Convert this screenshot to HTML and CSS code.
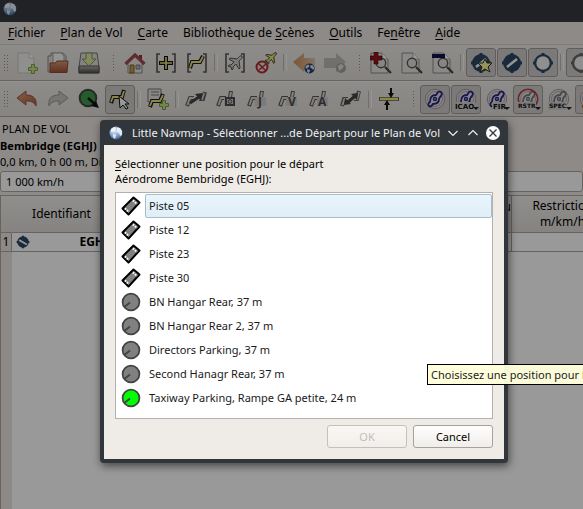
FILE: index.html
```html
<!DOCTYPE html>
<html lang="fr">
<head>
<meta charset="utf-8">
<title>Little Navmap</title>
<link rel="stylesheet" href="styles.css">
</head>
<body>
<svg class="defs" aria-hidden="true">
  <defs>
    <linearGradient id="orange" x1="0" y1="0" x2="1" y2="0"><stop offset="0" stop-color="#cf8f5c"/><stop offset="1" stop-color="#dcc3a8"/></linearGradient>
    <linearGradient id="folder" x1="0" y1="0" x2="0" y2="1"><stop offset="0" stop-color="#ce9880"/><stop offset="1" stop-color="#a8502f"/></linearGradient>
    <linearGradient id="undo" x1="0" y1="0" x2="1" y2="1"><stop offset="0" stop-color="#dca07c"/><stop offset="1" stop-color="#a85a3c"/></linearGradient>
    <linearGradient id="metal" x1="0" y1="0" x2="0" y2="1"><stop offset="0" stop-color="#b5b3b0"/><stop offset="1" stop-color="#4c4a48"/></linearGradient>
    <radialGradient id="ball" cx=".4" cy=".3" r=".8"><stop offset="0" stop-color="#e8f2fc"/><stop offset=".55" stop-color="#7fa3cc"/><stop offset="1" stop-color="#2b4d80"/></radialGradient>
    <symbol id="globe" viewBox="0 0 14 14"><circle cx="7" cy="7" r="6.5" fill="url(#ball)"/><path d="M2 3l3-2 2 1-1 2-2 2-2 0zM8 2l3 0 2 3 0 4-2 1-1-3-2-1zM4 8l3 1-1 4-2-2z" fill="#f4f7fa" opacity=".85"/></symbol>
    <symbol id="darkglobe" viewBox="0 0 14 14"><circle cx="7" cy="7" r="6.5" fill="#25446e"/><path d="M2 4l3-2 2 1-1 2-2 2-2 0zM8 3l3 0 2 3-1 3-2-2-2-1zM4 8l4 1-2 4-2-2z" fill="#dde6ee"/></symbol>
    <symbol id="plus" viewBox="0 0 10 10"><path d="M3.5.5h3v3h3v3h-3v3h-3v-3h-3v-3h3z" fill="#c3dc88" stroke="#7f9f42"/></symbol>
    <symbol id="new" viewBox="0 0 22 22"><path d="M2 1h11l5 5v15H2z" fill="#efefec" stroke="#c9c7c3"/><path d="M13 1v5h5" fill="#fff" stroke="#c9c7c3"/><use href="#plus" x="12" y="12" width="10" height="10"/></symbol>
    <symbol id="open" viewBox="0 0 22 22"><path d="M1 20V4h3V1h12l3 3v16z" fill="#dcdad7" stroke="#8c8a86"/><path d="M6 1h8l3 3v8H6z" fill="#f7f7f5" stroke="#a5a39f"/><path d="M3 20.500V11h5l2-2h11l-1 11.500z" fill="url(#folder)" stroke="#8f4a31"/></symbol>
    <symbol id="save" viewBox="0 0 22 22"><path d="M3 1h16l2 14v6H1v-6z" fill="#deddda" stroke="#75736f"/><path d="M1 14h20v7H1z" fill="url(#metal)" stroke="#55534f"/><path d="M8 1h6v6h4l-7 7-7-7h4z" fill="#dce7a0" stroke="#839352"/></symbol>
    <symbol id="home" viewBox="0 0 22 22"><path d="M4 10v11h14V10l-7-7z" fill="#e8e5df" stroke="#898581"/><path d="M15 3h3v5h-3z" fill="#8f3434"/><path d="M1.500 12L11 3l9.500 9" fill="none" stroke="#a04a50" stroke-width="3.200"/><path d="M6 13h4v8H6z" fill="#c49a55" stroke="#80602d"/><path d="M12 13h4v4h-4z" fill="#a4bad0" stroke="#777"/></symbol>
    <symbol id="brackets" viewBox="0 0 22 22"><path d="M5 2H2v18h3M17 2h3v18h-3" fill="none" stroke="#555" stroke-width="1.600"/></symbol>
    <symbol id="center" viewBox="0 0 22 22"><use href="#brackets"/><path d="M11 4v14M4 11h14" stroke="#111" stroke-width="4"/><path d="M11 5v12M5 11h12" stroke="#e9e275" stroke-width="1.600"/></symbol>
    <symbol id="track" viewBox="0 0 22 22"><path d="M4 16l2-6h8l3-6" fill="none" stroke="#1a1a1a" stroke-width="4"/><path d="M4 15.500l2-5.500h8l3-5.500" fill="none" stroke="#e9e275" stroke-width="1.800"/></symbol>
    <symbol id="fit" viewBox="0 0 22 22"><use href="#brackets"/><use href="#track"/></symbol>
    <symbol id="jet" viewBox="0 0 16 16"><path d="M15 1c-2-1-3 1-5 3L3 3 2 4l5 3-3 3-2 0-1 1 3 1 1 3 1-1 0-2 3-3 3 5 1-1-1-7c2-2 4-3 3-5z"/></symbol>
    <symbol id="aircraft" viewBox="0 0 22 22"><use href="#brackets"/><use href="#jet" x="3" y="3" width="16" height="16" fill="#ccc" stroke="#555"/></symbol>
    <symbol id="notrail" viewBox="0 0 22 22"><use href="#jet" x="9" y="0" width="13" height="13" fill="#eee66e" stroke="#222"/><circle cx="7" cy="15" r="5.500" fill="#ddd" stroke="#b12a32" stroke-width="2"/><path d="M3 11l8 8M11 12l-7 6" stroke="#b12a32" stroke-width="1.500"/></symbol>
    <symbol id="back" viewBox="0 0 22 22"><path d="M0 10L11 1v5h11v10H11v4z" fill="url(#orange)"/><use href="#darkglobe" x="11" y="11" width="11" height="11"/></symbol>
    <symbol id="forward" viewBox="0 0 22 22"><g opacity=".7"><path d="M22 10L12 1v5H0v10h12v4z" fill="#aaaaa8"/><circle cx="17" cy="16" r="5" fill="#888"/><path d="M14 14l3-2 3 2-2 3-3 2z" fill="#ddd"/></g></symbol>
    <symbol id="zoom" viewBox="0 0 22 22"><path d="M1 1h11l6 6v14H1z" fill="#e6e5e2" stroke="#8d8b87"/><path d="M12 1v6h6" fill="#fff" stroke="#aaa"/><circle cx="11" cy="11" r="4.700" fill="#deded9" stroke="#555" stroke-width="1.400"/><path d="M15 15l6 6" stroke="#444" stroke-width="2.200"/></symbol>
    <symbol id="zoomplus" viewBox="0 0 22 22"><use href="#zoom"/><path d="M4 0h4v4h4v4H8v4H4V8H0V4h4z" fill="#951620" stroke="#400" stroke-width=".6"/></symbol>
    <symbol id="zoombar" viewBox="0 0 22 22"><use href="#zoom"/><path d="M0 2h13v4H0z" fill="#12124f"/></symbol>
    <symbol id="port" viewBox="0 0 22 22"><path d="M11 1v20M1 11h20" stroke="#2a4766" stroke-width="3"/><circle cx="11" cy="11" r="9" fill="#2a4766"/></symbol>
    <symbol id="portline" viewBox="0 0 22 22"><use href="#port"/><path d="M6 15l10-8" stroke="#f5f5f5" stroke-width="2.600"/></symbol>
    <symbol id="portlineback" viewBox="0 0 22 22"><use href="#port"/><path d="M5 8l12 7" stroke="#f5f5f5" stroke-width="3"/></symbol>
    <symbol id="portstar" viewBox="0 0 22 22"><use href="#portline"/><path d="M15 7l2 4 5 0-4 4 2 5-5-3-5 3 2-5-4-4 5 0z" fill="#fbf59b" stroke="#33331c"/></symbol>
    <symbol id="portopen" viewBox="0 0 22 22"><use href="#port"/><circle cx="11" cy="11" r="6.700" fill="#eee"/></symbol>
    <symbol id="portgray" viewBox="0 0 22 22"><path d="M11 1v20M1 11h20" stroke="#666" stroke-width="3"/><circle cx="11" cy="11" r="8" fill="#eee" stroke="#666" stroke-width="2.500"/></symbol>
    <symbol id="undoarrow" viewBox="0 0 22 22"><path d="M1 10l9-7v4c8 0 11 4 10 11-2-4-5-5-10-5v4z" fill="url(#undo)" stroke="#9a5a3f"/></symbol>
    <symbol id="redoarrow" viewBox="0 0 22 22"><path d="M21 10l-9-7v4C4 7 1 11 2 18c2-4 5-5 10-5v4z" fill="#c5c4c2" stroke="#969592"/></symbol>
    <symbol id="go" viewBox="0 0 22 22"><circle cx="10" cy="10" r="8.300" fill="#3c9b48" stroke="#444" stroke-width="2"/><path d="M10 10l8 7" stroke="#111" stroke-width="2.500"/><path d="M21 20l-8-2 5-5z" fill="#111"/></symbol>
    <symbol id="edit" viewBox="0 0 22 22"><path d="M2 15l2-6h9l2-7" fill="none" stroke="#1a1a1a" stroke-width="4"/><path d="M2 14l2-5h9l2-6" fill="none" stroke="#e9e275" stroke-width="1.800"/><path d="M10 8l10 8-4 0 3 4-2 1-3-4-3 3z" fill="#fff" stroke="#111"/></symbol>
    <symbol id="append" viewBox="0 0 22 22"><path d="M1 1h13v13H1z" fill="#e3e2df" stroke="#777"/><path d="M4 4h8M4 7h8" stroke="#777"/><path d="M3 19l2-6h8l3-7" fill="none" stroke="#1a1a1a" stroke-width="4"/><path d="M3 18l2-5h8l3-6" fill="none" stroke="#e9e275" stroke-width="1.800"/><use href="#plus" x="12" y="12" width="10" height="10"/></symbol>
    <symbol id="graytrack" viewBox="0 0 22 22"><path d="M2 18l3-8h5" fill="none" stroke="#5a5855" stroke-width="4"/><path d="M14 9l1-6" fill="none" stroke="#5a5855" stroke-width="4"/><path d="M2.500 17l2.500-7h5M14 9l1-5" fill="none" stroke="#d8d5d2" stroke-width="2"/><path d="M8 9h11v9H8z" fill="#d0cdca"/></symbol>
    <symbol id="direct" viewBox="0 0 22 22"><path d="M2 18l3-8h4M14 11h4l2-7" fill="none" stroke="#66635f" stroke-width="4"/><path d="M2.500 17l2.500-7h4M14 11h3l2-6" fill="none" stroke="#d8d5d2" stroke-width="2"/><path d="M5 15l9-6" stroke="#444" stroke-width="3"/><path d="M18 5l-2 8-6-7z" fill="#444"/></symbol>
    <symbol id="double" viewBox="0 0 22 22"><path d="M2 18l2-7h4M14 11h3l2-8" fill="none" stroke="#66635f" stroke-width="4"/><path d="M2.500 17l2-6h4M14 11h3l2-7" fill="none" stroke="#d8d5d2" stroke-width="2"/><path d="M7 15l8-7" stroke="#444" stroke-width="3"/><path d="M4 17l1-7 6 6zM18 5l-7 1 6 6z" fill="#444"/></symbol>
    <symbol id="merge" viewBox="0 0 22 22"><path d="M1 11h20" stroke="#66635a" stroke-width="4"/><path d="M2 11h18" stroke="#e9e275" stroke-width="2.400"/><path d="M13 0v5M9 22v-6" stroke="#111" stroke-width="2"/><path d="M10 5h6l-3 5zM6 17h6l-3-5z" fill="#111"/></symbol>
    <symbol id="space" viewBox="0 0 22 22"><circle cx="11" cy="11" r="9.700" fill="#e3dfdc" stroke="#a58b90" stroke-width=".9"/><circle cx="11" cy="11" r="7.500" fill="none" stroke="#9a98a8" stroke-width=".8"/><path d="M5 18c-1-1-1-3 1-4 0-5 2-7 6-7l2-3c3-1 5 1 3 4-1 1-2 2-2 3 0 4-3 5-6 5-1 2-3 3-4 2z" fill="#dedce4" stroke="currentColor" stroke-width="1.800"/><circle cx="11" cy="11" r="1.500" fill="none" stroke="currentColor" stroke-width="1.400"/></symbol>
    <symbol id="ring" viewBox="0 0 22 22"><circle cx="11" cy="11" r="9.700" fill="none" stroke="currentColor" stroke-width="1.600"/></symbol>
    <symbol id="runway" viewBox="0 0 20 20"><path d="M1.500 12.500L12.500 1.500l6 5L7.500 18.500z" fill="#808080" stroke="#000" stroke-width="2" stroke-linejoin="round"/><path d="M4 12.500l4 3.500M12 4.500l4 3.500" stroke="#fff" stroke-width="2" stroke-dasharray="1.500 1"/></symbol>
    <symbol id="stand" viewBox="0 0 20 20"><circle cx="10" cy="10" r="8.400" fill="currentColor" stroke="#444" stroke-width="1.800"/><path d="M4 14.500l5-4" stroke="#444" stroke-width="2"/></symbol>
  </defs>
</svg>

<div class="window">
  <header class="titlebar"><svg class="globe"><use href="#globe"/></svg></header>
  <nav class="menubar">
    <a href="#"><u>F</u>ichier</a><a href="#"><u>P</u>lan de Vol</a><a href="#"><u>C</u>arte</a><a href="#">Bibliothèque de <u>S</u>cènes</a><a href="#"><u>O</u>utils</a><a href="#">Fe<u>n</u>être</a><a href="#"><u>A</u>ide</a>
  </nav>
  <div class="toolbar">
    <span class="grip first"></span>
    <button class="tool"><svg><use href="#new"/></svg></button>
    <button class="tool"><svg><use href="#open"/></svg></button>
    <button class="tool"><svg><use href="#save"/></svg></button>
    <span class="grip"></span>
    <button class="tool"><svg><use href="#home"/></svg></button>
    <button class="tool"><svg><use href="#center"/></svg></button>
    <button class="tool"><svg><use href="#fit"/></svg></button>
    <span class="sep"></span>
    <button class="tool"><svg><use href="#aircraft"/></svg></button>
    <button class="tool"><svg><use href="#notrail"/></svg></button>
    <span class="sep"></span>
    <button class="tool"><svg><use href="#back"/></svg></button>
    <button class="tool"><svg><use href="#forward"/></svg></button>
    <span class="grip"></span>
    <button class="tool"><svg><use href="#zoomplus"/></svg></button>
    <button class="tool"><svg><use href="#zoom"/></svg></button>
    <button class="tool"><svg><use href="#zoombar"/></svg></button>
    <span class="sep"></span>
    <button class="tool on"><svg><use href="#portstar"/></svg></button>
    <button class="tool on"><svg><use href="#portline"/></svg></button>
    <button class="tool on"><svg><use href="#portopen"/></svg></button>
    <span class="sep"></span>
    <button class="tool on"><svg><use href="#portgray"/></svg></button>
  </div>
  <div class="toolbar">
    <span class="grip first"></span>
    <button class="tool"><svg><use href="#undoarrow"/></svg></button>
    <button class="tool"><svg><use href="#redoarrow"/></svg></button>
    <button class="tool"><svg><use href="#go"/></svg></button>
    <button class="tool on"><svg><use href="#edit"/></svg></button>
    <span class="sep"></span>
    <button class="tool"><svg><use href="#append"/></svg></button>
    <span class="sep"></span>
    <button class="tool"><svg><use href="#direct"/></svg></button>
    <button class="tool"><svg viewBox="0 0 22 22"><use href="#graytrack"/><path d="M10 10h8v7h-8z" fill="#ccc" stroke="#4c4c4c" stroke-width="2"/><circle cx="14" cy="13.500" r="1.800" fill="none" stroke="#4c4c4c"/></svg></button>
    <button class="tool"><svg viewBox="0 0 22 22"><use href="#graytrack"/><text class="leg" x="11" y="18">J</text></svg></button>
    <button class="tool"><svg viewBox="0 0 22 22"><use href="#graytrack"/><text class="leg" x="10" y="18">V</text></svg></button>
    <button class="tool"><svg viewBox="0 0 22 22"><use href="#graytrack"/><text class="leg" x="9" y="18">A</text></svg></button>
    <button class="tool"><svg><use href="#double"/></svg></button>
    <span class="sep"></span>
    <button class="tool"><svg><use href="#merge"/></svg></button>
    <span class="grip"></span>
    <button class="tool on blue"><svg><use href="#space"/></svg></button>
    <button class="tool on blue drop"><svg viewBox="0 0 22 22"><use href="#space"/><path class="plate" d="M0 14h20v8H0z"/><text class="tag" x="0" y="21">ICAO</text></svg></button>
    <button class="tool blue drop"><svg viewBox="0 0 22 22"><use href="#space"/><path class="plate" d="M6 14h14v8H6z"/><text class="tag" x="7" y="21">FIR</text></svg></button>
    <button class="tool on gray drop"><svg viewBox="0 0 22 22"><use href="#space"/><use class="red" href="#ring"/><path class="plate" d="M0 14h19v8H0z"/><text class="tag small" x="1" y="20">RSTR</text></svg></button>
    <button class="tool gray drop"><svg viewBox="0 0 22 22"><use href="#space"/><path class="plate" d="M0 14h18v8H0z"/><text class="tag small" x="1" y="20">SPEC</text></svg></button>
    <button class="tool on gray drop"><svg viewBox="0 0 22 22"><use href="#space"/><path class="plate" d="M3 14h16v8H3z"/><text class="tag" x="3" y="21">O</text></svg></button>
  </div>
  <main class="plan">
    <h2>PLAN DE VOL</h2>
    <p class="route">Bembridge (EGHJ)</p>
    <p class="summary">0,0 km, 0 h 00 m, Di</p>
    <input class="speed" type="text" value="1 000 km/h" aria-label="Vitesse">
    <div class="grid">
      <table>
        <colgroup><col class="c-num"><col class="c-ident"><col class="c-mid"><col class="c-restr"></colgroup>
        <thead><tr><th class="corner"></th><th>Identifiant</th><th class="end">u</th><th>Restriction<br>m/km/h</th></tr></thead>
        <tbody><tr><th>1</th><td><span class="ident"><svg><use href="#portlineback"/></svg><b>EGHJ</b></span></td><td></td><td></td></tr></tbody>
      </table>
    </div>
  </main>
</div>

<div class="shade"></div>

<section class="dialog" role="dialog" aria-labelledby="dialog-title">
  <header class="dialog-title">
    <svg class="globe"><use href="#globe"/></svg>
    <h1 id="dialog-title">Little Navmap - Sélectionner ...de Départ pour le Plan de Vol</h1>
    <button aria-label="Réduire"><svg viewBox="0 0 14 14"><path d="M2.500 5L7 9.500 11.500 5" fill="none" stroke="#eee" stroke-width="1.200"/></svg></button>
    <button aria-label="Agrandir"><svg viewBox="0 0 14 14"><path d="M2.500 9L7 4.500 11.500 9" fill="none" stroke="#eee" stroke-width="1.200"/></svg></button>
    <button aria-label="Fermer"><svg viewBox="0 0 14 14"><circle cx="7" cy="7" r="7" fill="#fcfcfc"/><path d="M3.500 3.500l7 7M10.500 3.500l-7 7" stroke="#31363b" stroke-width="1.300"/></svg></button>
  </header>
  <div class="dialog-body">
    <p class="prompt" id="prompt"><u>S</u>électionner une position pour le départ<br>Aérodrome Bembridge (EGHJ):</p>
    <ul class="list" role="listbox" aria-labelledby="prompt">
      <li role="option" aria-selected="true" class="current"><svg><use href="#runway"/></svg><span>Piste 05</span></li>
      <li role="option"><svg><use href="#runway"/></svg><span>Piste 12</span></li>
      <li role="option"><svg><use href="#runway"/></svg><span>Piste 23</span></li>
      <li role="option"><svg><use href="#runway"/></svg><span>Piste 30</span></li>
      <li role="option"><svg><use href="#stand"/></svg><span>BN Hangar Rear, 37 m</span></li>
      <li role="option"><svg><use href="#stand"/></svg><span>BN Hangar Rear 2, 37 m</span></li>
      <li role="option"><svg><use href="#stand"/></svg><span>Directors Parking, 37 m</span></li>
      <li role="option"><svg><use href="#stand"/></svg><span>Second Hanagr Rear, 37 m</span></li>
      <li role="option"><svg class="ramp"><use href="#stand"/></svg><span>Taxiway Parking, Rampe GA petite, 24 m</span></li>
    </ul>
    <div class="actions"><button disabled>OK</button><button>Cancel</button></div>
  </div>
</section>
<div class="tooltip" role="tooltip">Choisissez une position pour le départ</div>
</body>
</html>
```
FILE: styles.css
```css
* { box-sizing: border-box; }
html, body { margin: 0; height: 100%; overflow: hidden; }
body { position: relative; font: 11px/16px "Noto Sans", sans-serif; color: #000; background: #fff; }
button, input { font: inherit; color: inherit; }
h1, h2, p, ul { margin: 0; padding: 0; font-size: inherit; font-weight: 400; }
u { text-underline-offset: 2px; }
svg { display: block; flex: none; }
.defs { position: absolute; width: 0; height: 0; }
.globe { width: 14px; height: 14px; }

.window { display: flex; flex-direction: column; min-height: 100%; background: #ebe7e3; }
.titlebar { height: 22px; padding: 2px 3px; background: #363a3e; }
.menubar { display: flex; gap: 15px; padding: 0 8px; height: 22px; font-size: 12px; line-height: 22px; white-space: nowrap; }
.menubar a { color: inherit; text-decoration: none; }

.toolbar { display: flex; align-items: center; gap: 1px; height: 37px; overflow: hidden; border-top: 1px solid #d6d2cd; border-bottom: 1px solid #aaa7a3; background: linear-gradient(#edeae6, #e1ddd9); }
.toolbar + .toolbar { height: 36px; border-top-color: #f8f5f2; }
.tool { flex: none; display: grid; place-items: center; position: relative; width: 30px; height: 29px; padding: 0; border: 1px solid transparent; border-radius: 3px; background: none; }
.tool svg { width: 22px; height: 22px; }
.tool.on { border-color: #a19d99; background: #cfccc9; }
.tool.blue { color: #262680; }
.tool.gray { color: #777; }
.tool .red { color: #b93a42; }
.tool.drop::after { content: ""; position: absolute; right: 1px; bottom: 3px; border: 3px solid transparent; border-top-color: #222; border-bottom: 0; }
.plate { fill: #d2d0cd; }
.tag { font: bold 7px "DejaVu Sans", sans-serif; fill: #111; }
.tag.small { font-size: 6px; }
.leg { font: bold 12px "Noto Sans", sans-serif; fill: #4c4c4c; }
.grip { flex: none; width: 14px; height: 18px; padding-left: 7px; background: radial-gradient(circle, #97938f 1px, transparent 1px) 0 0 / 3px 3px content-box content-box; border-right: 3px solid transparent; }
.grip.first { width: 11px; padding-left: 3px; }
.sep { flex: none; width: 6px; height: 17px; display: grid; justify-content: center; }
.sep::before { content: ""; width: 2px; border-left: 1px solid #bdb9b5; border-right: 1px solid #faf8f6; }

.plan { flex: 1; display: flex; flex-direction: column; padding-top: 3px; }
.plan h2 { padding-left: 2px; line-height: 17px; }
.route { font-weight: 700; line-height: 17px; }
.summary { line-height: 16px; }
.speed { flex: none; height: 21px; margin: 1px 0 3px; padding: 0 5px; border: 1px solid #aaa6a2; border-radius: 3px; background: #fff; width: 100%; }
.grid { flex: 1; overflow: hidden; border-top: 1px solid #aaa6a2; border-left: 1px solid #aaa6a2; background: linear-gradient(90deg, #e9e5e1 11px, #fff 11px); }
table { table-layout: fixed; width: 613px; border-collapse: separate; border-spacing: 0; font-size: 12px; }
.c-num { width: 11px; }
.c-ident { width: 100px; }
.c-mid { width: 400px; }
.c-restr { width: 102px; }
th, td { padding: 0; font-weight: 400; border-right: 1px solid #aaa6a2; border-bottom: 1px solid #aaa6a2; }
thead th { height: 37px; background: linear-gradient(#f1eeeb, #dfdbd7); }
thead .corner { border-right-color: transparent; }
thead .end { text-align: right; vertical-align: top; padding-top: 3px; }
tbody th { background: #e9e5e1; }
tbody td { height: 19px; background: #fff; }
.ident { display: flex; justify-content: space-between; align-items: center; padding: 0 3px 0 4px; }
.ident svg { width: 14px; height: 14px; }

.shade { position: absolute; inset: 0; background: rgba(0, 0, 0, .4); }

.dialog { position: absolute; left: 100px; top: 120px; width: 408px; border-radius: 4px; padding: 0 4px 4px; background: #31363b; box-shadow: 1px 3px 9px rgba(0, 0, 0, .55); }
.dialog-title { display: flex; align-items: center; gap: 6px; height: 25px; padding: 0 5px; color: #eff0f1; }
.dialog-title h1 { flex: 1; padding-left: 3px; white-space: nowrap; }
.dialog-title button { padding: 0; border: 0; background: none; }
.dialog-title button svg { width: 14px; height: 14px; }
.dialog-body { padding: 11px; background: #efebe7; }
.prompt { line-height: 15px; margin-bottom: 6px; }
.list { height: 227px; list-style: none; background: #fff; border: 1px solid #b4b0ac; padding-top: 1px; }
.list li { display: flex; align-items: center; height: 24px; padding-left: 5px; color: #1a1a1a; }
.list svg { width: 20px; height: 20px; margin-right: 4px; color: #808080; }
.list svg.ramp { color: #0f0; }
.list span { flex: 1; line-height: 22px; padding-left: 3px; border: 1px solid transparent; }
.current span { background: linear-gradient(#e9f5fd, #e0eef7); border-color: #a9bccb; border-radius: 2px; }
.actions { display: flex; justify-content: flex-end; gap: 6px; margin-top: 6px; }
.actions button { width: 80px; height: 23px; padding: 0; border: 1px solid #a5a19d; border-radius: 3px; background: linear-gradient(#fefefd, #f0edea); }
.actions button:disabled { color: #c0bdba; border-color: #c4c1bd; background: linear-gradient(#f9f7f5, #f1eeea); }

.tooltip { position: absolute; left: 427px; top: 364px; right: 0; height: 21px; padding: 0 3px; overflow: hidden; white-space: nowrap; line-height: 20px; border: 1px solid #000; border-right: 0; color: #222; background: rgba(255, 255, 220, .96); }
```
